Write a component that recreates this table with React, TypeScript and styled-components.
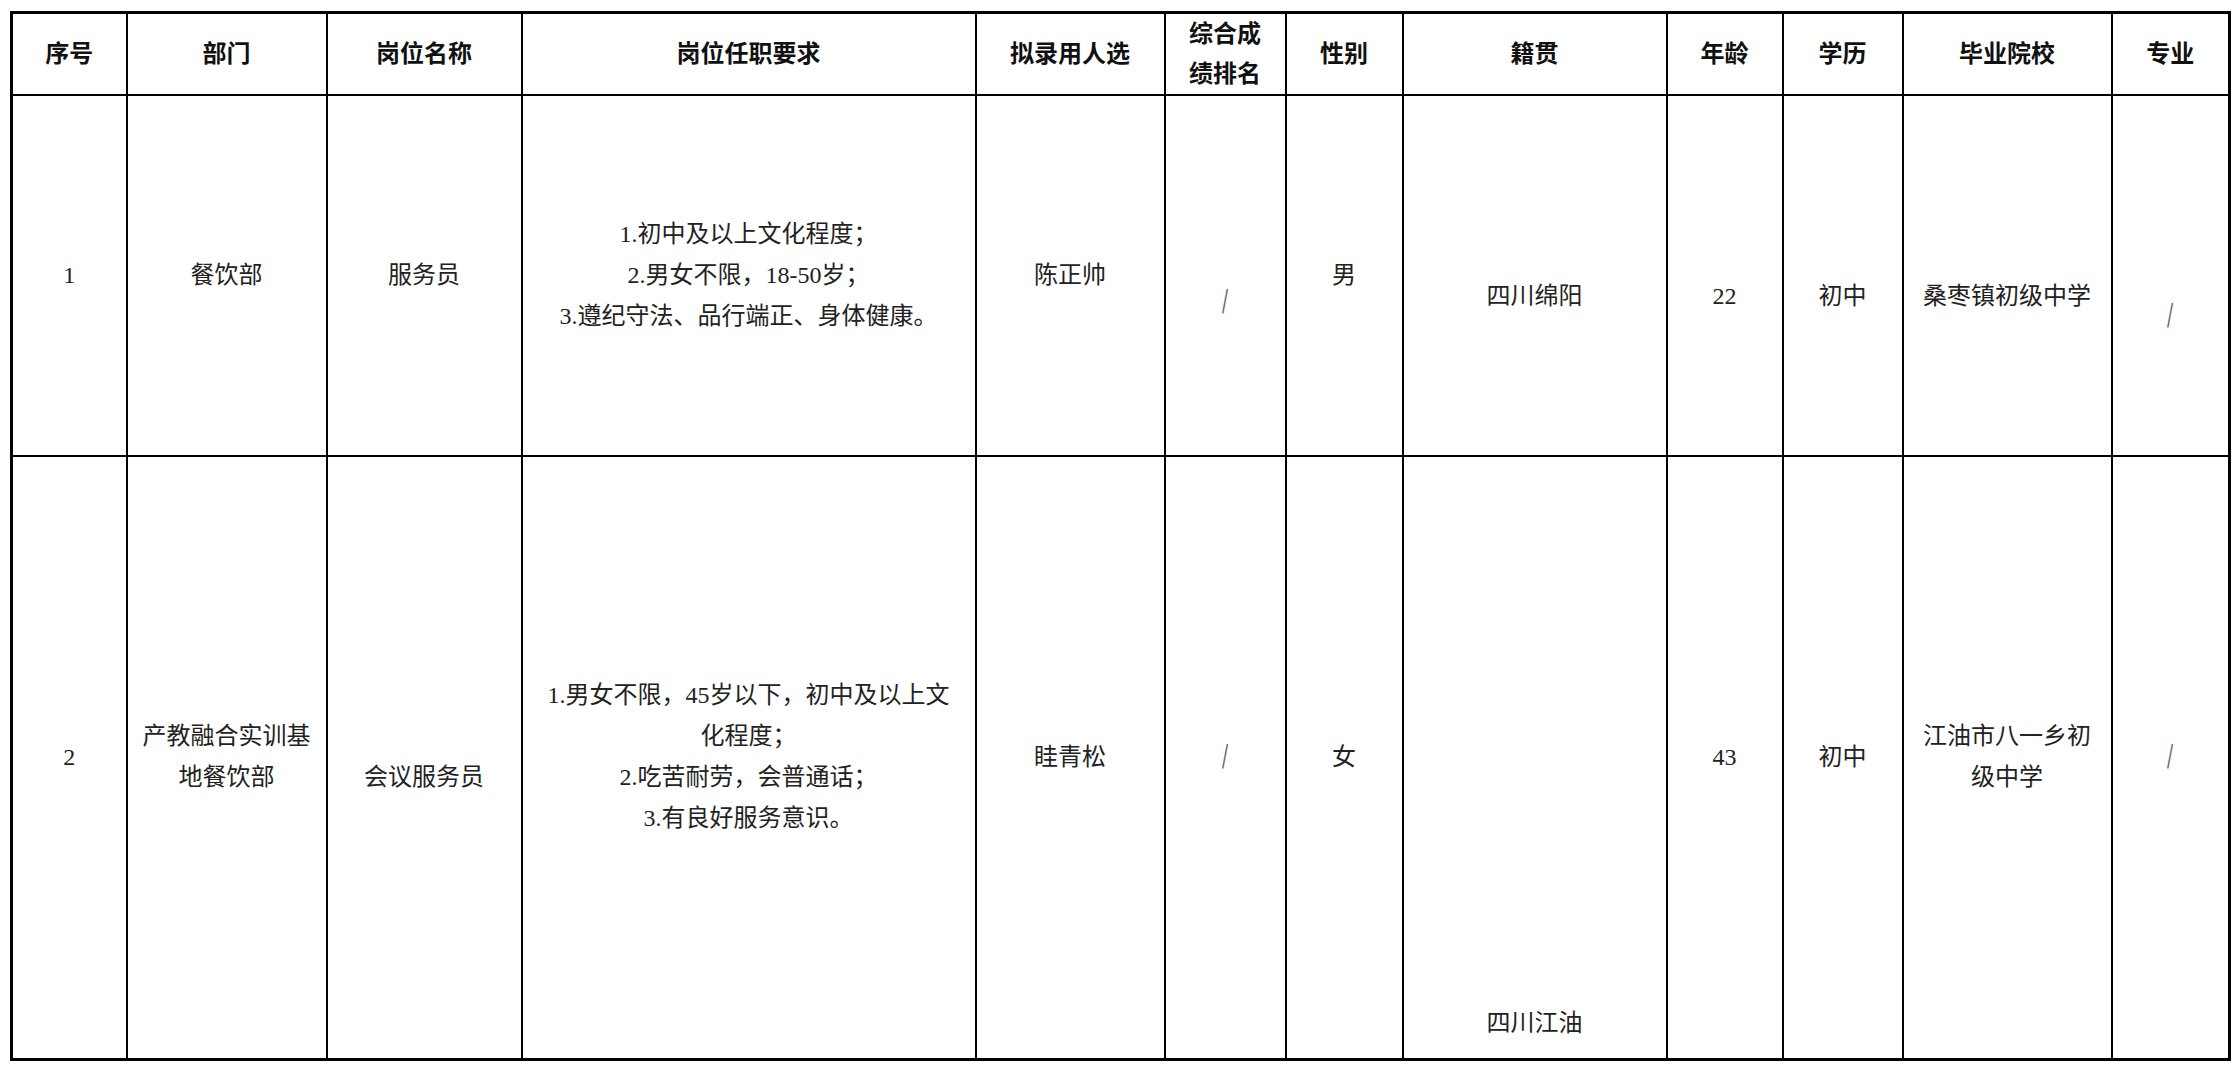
import React from "react";
import styled, { createGlobalStyle } from "styled-components";

const GlobalStyle = createGlobalStyle`
    html, body {
        margin: 0;
        padding: 0;
        background: #fff;
    }
`;

const Page = styled.div`
    padding: 11px 10px 8px 10px;
    font-family: "Liberation Serif", "Noto Sans CJK SC", serif;
`;

const Table = styled.table`
    border-collapse: collapse;
    table-layout: fixed;
    width: 2218px;
    border: 3px solid #000;
`;

const Row = styled.tr<{ $height: number }>`
    height: ${(p) => p.$height}px;
`;

const HeadCell = styled.th`
    border: 2px solid #000;
    font-size: 24px;
    font-weight: bold;
    line-height: 40px;
    color: #111;
    text-align: center;
    vertical-align: middle;
    padding: 0 6px;
`;

const Cell = styled.td<{ $shift?: number; $bottom?: boolean }>`
    border: 2px solid #000;
    font-size: 24px;
    line-height: 41px;
    color: #222;
    text-align: center;
    vertical-align: ${(p) => (p.$bottom ? "bottom" : "middle")};
    padding: ${(p) => (p.$shift ? p.$shift * 2 : 0)}px 6px ${(p) => (p.$bottom ? 14 : 0)}px 6px;
`;

const Slash = styled.span`
    display: inline-block;
    font-family: "DejaVu Serif", "Liberation Serif", serif;
    font-size: 30px;
    font-weight: 200;
    color: #666;
    transform: scaleX(0.6);
`;

const widths = [115, 200, 195, 454, 189, 121, 117, 264, 116, 120, 209, 118];

const headers: React.ReactNode[] = [
    "序号",
    "部门",
    "岗位名称",
    "岗位任职要求",
    "拟录用人选",
    <>综合成<br />绩排名</>,
    "性别",
    "籍贯",
    "年龄",
    "学历",
    "毕业院校",
    "专业",
];

export default function App() {
    return (
        <Page>
            <GlobalStyle />
            <Table>
                <colgroup>
                    {widths.map((w, i) => (
                        <col key={i} style={{ width: w }} />
                    ))}
                </colgroup>
                <thead>
                    <Row $height={81}>
                        {headers.map((h, i) => (
                            <HeadCell key={i}>{h}</HeadCell>
                        ))}
                    </Row>
                </thead>
                <tbody>
                    <Row $height={361}>
                        <Cell>1</Cell>
                        <Cell>餐饮部</Cell>
                        <Cell>服务员</Cell>
                        <Cell>
                            1.初中及以上文化程度；<br />
                            2.男女不限，18-50岁；<br />
                            3.遵纪守法、品行端正、身体健康。
                        </Cell>
                        <Cell>陈正帅</Cell>
                        <Cell $shift={26}><Slash>/</Slash></Cell>
                        <Cell>男</Cell>
                        <Cell $shift={21}>四川绵阳</Cell>
                        <Cell $shift={21}>22</Cell>
                        <Cell $shift={21}>初中</Cell>
                        <Cell $shift={21}>桑枣镇初级中学</Cell>
                        <Cell $shift={40}><Slash>/</Slash></Cell>
                    </Row>
                    <Row $height={603}>
                        <Cell>2</Cell>
                        <Cell>产教融合实训基<br />地餐饮部</Cell>
                        <Cell $shift={20}>会议服务员</Cell>
                        <Cell>
                            1.男女不限，45岁以下，初中及以上文<br />
                            化程度；<br />
                            2.吃苦耐劳，会普通话；<br />
                            3.有良好服务意识。
                        </Cell>
                        <Cell>眭青松</Cell>
                        <Cell><Slash>/</Slash></Cell>
                        <Cell>女</Cell>
                        <Cell $bottom>四川江油</Cell>
                        <Cell>43</Cell>
                        <Cell>初中</Cell>
                        <Cell>江油市八一乡初<br />级中学</Cell>
                        <Cell><Slash>/</Slash></Cell>
                    </Row>
                </tbody>
            </Table>
        </Page>
    );
}
